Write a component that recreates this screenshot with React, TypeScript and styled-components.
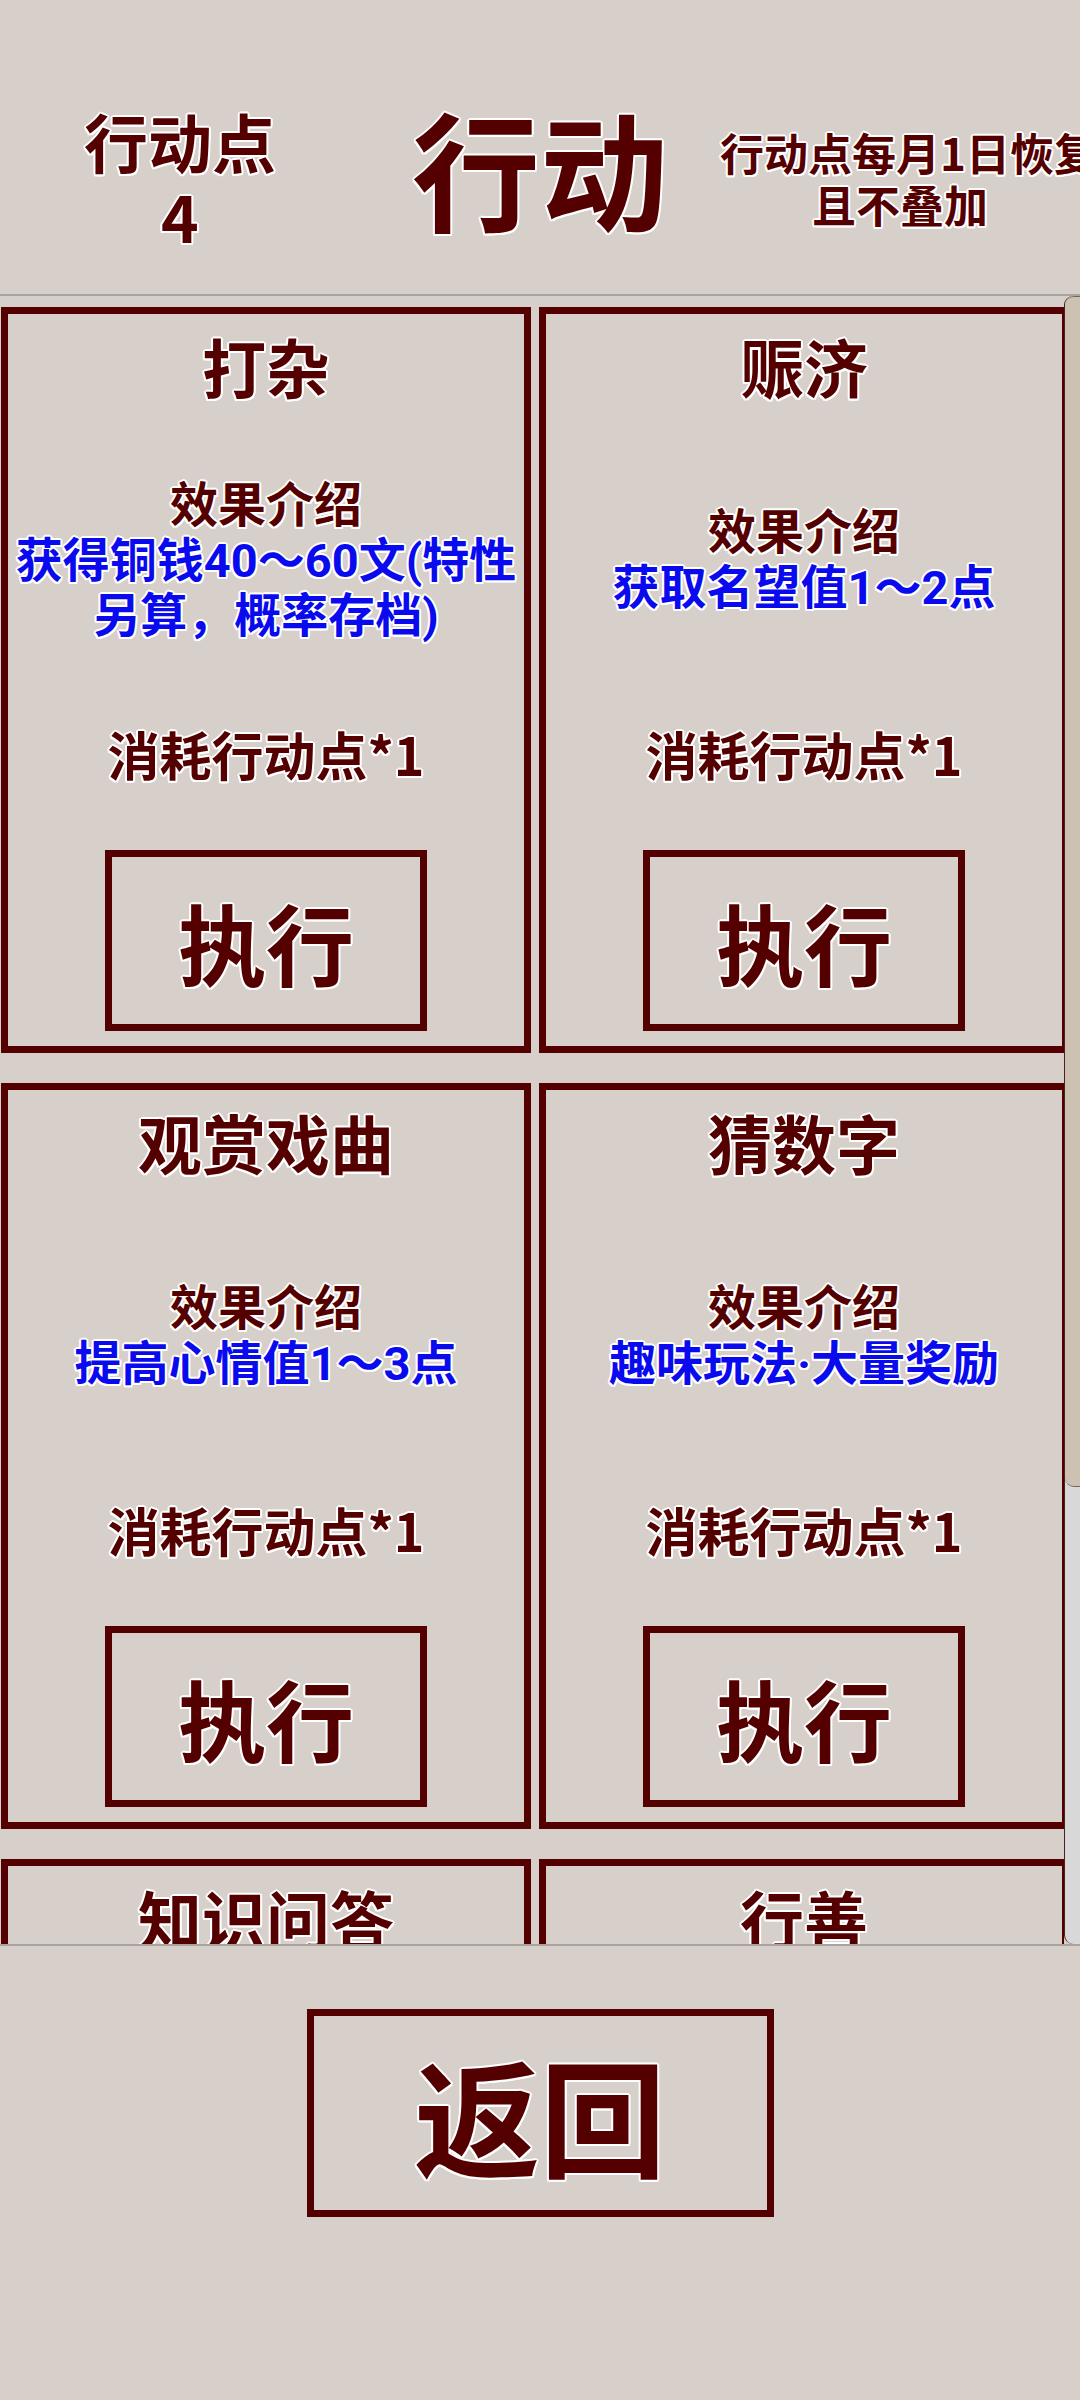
import React from "react";
import styled, { createGlobalStyle, css } from "styled-components";

// 行动页面：行动点显示 + 行动列表 + 返回按钮

const GlobalStyle = createGlobalStyle`
  html, body {
    margin: 0;
    padding: 0;
    background-color: #d7cfca;
  }
  body {
    font-family: "Noto Sans CJK SC", Roboto, sans-serif;
    font-weight: 700;
    color: #550000;
  }
`;

const outline = css`
  text-shadow: -1.5px -1.5px 0 #fff, 1.5px -1.5px 0 #fff, -1.5px 1.5px 0 #fff,
    1.5px 1.5px 0 #fff, 0 2px 0 #fff, 0 -2px 0 #fff, 2px 0 0 #fff,
    -2px 0 0 #fff;
`;

const actions = [
  { name: "打杂", effect: "获得铜钱40～60文(特性另算，概率存档)" },
  { name: "赈济", effect: "获取名望值1～2点" },
  { name: "观赏戏曲", effect: "提高心情值1～3点" },
  { name: "猜数字", effect: "趣味玩法·大量奖励" },
  { name: "知识问答", effect: "答对即可获得奖励" },
  { name: "行善", effect: "获取名望值1～3点" },
];

const VIEW_HEIGHT = 1648;
const CONTENT_HEIGHT = 2280;

export default function App() {
  const points = 4;
  const thumbHeight = Math.round((VIEW_HEIGHT / CONTENT_HEIGHT) * VIEW_HEIGHT);

  return (
    <>
      <GlobalStyle />
      <Page>
        <Header>
          <PointsBox>
            行动点
            <br />
            {points}
          </PointsBox>
          <Title>行动</Title>
          <Notice>
            行动点每月1日恢复
            <br />
            且不叠加
          </Notice>
        </Header>

        <ListFrame>
          <ListViewport>
            {actions.map((item) => (
              <ActionCard key={item.name}>
                <CardTitle>{item.name}</CardTitle>
                <Effect>
                  <EffectLabel>效果介绍</EffectLabel>
                  <EffectText>{item.effect}</EffectText>
                </Effect>
                <Cost>消耗行动点*1</Cost>
                <ExecButton>执行</ExecButton>
              </ActionCard>
            ))}
          </ListViewport>
          <ScrollRail>
            <ScrollThumb style={{ height: thumbHeight }} />
          </ScrollRail>
        </ListFrame>

        <Footer>
          <BackButton>返回</BackButton>
        </Footer>
      </Page>
    </>
  );
}

const Page = styled.div`
  width: 1080px;
  min-height: 2400px;
  background-color: #d7cfca;
  display: flex;
  flex-direction: column;
`;

const Header = styled.div`
  height: 294px;
  box-sizing: border-box;
  padding-top: 62px;
  display: grid;
  grid-template-columns: 360px 360px 360px;
  align-items: center;
  text-align: center;
  white-space: nowrap;
  overflow: hidden;
`;

const PointsBox = styled.div`
  font-size: 64px;
  line-height: 75px;
  ${outline}
`;

const Title = styled.div`
  font-size: 128px;
  line-height: 150px;
  margin-bottom: 23px;
  ${outline}
`;

const Notice = styled.div`
  font-size: 44px;
  line-height: 52px;
  ${outline}
`;

const ListFrame = styled.div`
  height: 1652px;
  box-sizing: border-box;
  border-top: 2px solid #a9a39f;
  border-bottom: 2px solid #a9a39f;
  display: flex;
`;

const ListViewport = styled.div`
  width: 1064px;
  box-sizing: border-box;
  padding: 11px 0 12px 1px;
  display: grid;
  grid-template-columns: 530px 530px;
  grid-auto-rows: 746px;
  align-content: start;
  column-gap: 8px;
  row-gap: 30px;
  overflow: hidden;
`;

const ScrollRail = styled.div`
  width: 16px;
  box-sizing: border-box;
  background: #d8d8d8;
  border-left: 1.5px solid #4a2020;
  border-radius: 9px 0 0 9px;
  overflow: hidden;
`;

const ScrollThumb = styled.div`
  box-sizing: border-box;
  background: #cdc1b2;
  border-top: 1.5px solid #6f6660;
  border-bottom: 1.5px solid #6f6660;
  border-radius: 9px 0 0 9px;
`;

const ActionCard = styled.div`
  box-sizing: border-box;
  border: 7px solid #550000;
  padding: 14px 0 15px;
  display: flex;
  flex-direction: column;
  align-items: center;
`;

const CardTitle = styled.div`
  font-size: 64px;
  line-height: 74px;
  height: 74px;
  ${outline}
`;

const Effect = styled.div`
  height: 308px;
  width: 100%;
  box-sizing: border-box;
  padding-top: 4px;
  display: flex;
  flex-direction: column;
  justify-content: center;
  align-items: center;
  text-align: center;
  font-size: 48px;
  line-height: 55px;
`;

const EffectLabel = styled.div`
  ${outline}
`;

const EffectText = styled.div`
  padding-top: 4px;
  color: #0a0aee;
  font-family: Roboto, "Noto Sans CJK SC", sans-serif;
  font-size: 47px;
  ${outline}
`;

const Cost = styled.div`
  margin-top: 13px;
  font-size: 52px;
  line-height: 62px;
  ${outline}
`;

const ExecButton = styled.button`
  margin-top: 65px;
  width: 322px;
  height: 181px;
  box-sizing: border-box;
  border: 7px solid #550000;
  background: transparent;
  color: #550000;
  font-family: "Noto Sans CJK SC", sans-serif;
  font-weight: 700;
  font-size: 88px;
  line-height: 1;
  padding: 0;
  ${outline}
`;

const Footer = styled.div`
  display: flex;
  justify-content: center;
  padding-top: 63px;
`;

const BackButton = styled.button`
  width: 467px;
  height: 208px;
  box-sizing: border-box;
  border: 7px solid #550000;
  background: transparent;
  color: #550000;
  font-family: "Noto Sans CJK SC", sans-serif;
  font-weight: 700;
  font-size: 126px;
  line-height: 1;
  padding: 0;
  ${outline}
`;
